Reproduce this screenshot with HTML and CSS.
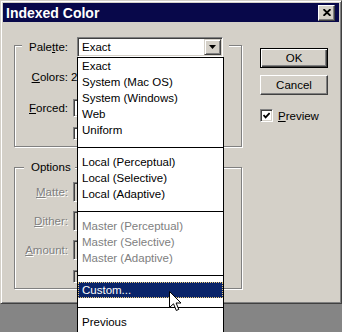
FILE: index.html
```html
<html lang="en">
<head>
    <meta charset="UTF-8">
    <title>Indexed Color</title>
    <link rel="stylesheet" href="styles.css">
</head>
<body>
    <div class="dialog">
        <div class="titlebar">
            <span class="title">Indexed Color</span>
            <span class="close-btn">
                <svg width="8" height="7" viewBox="0 0 8 7"><path d="M0.5 0.2 L7.5 6.8 M7.5 0.2 L0.5 6.8" stroke="#000" stroke-width="1.9"/></svg>
            </span>
        </div>

        <div class="dialog-body">
            <div class="groups">
                <!-- Palette group -->
                <div class="group group-palette">
                    <div class="group-head palette-head">
                        <span class="label">Pale<u>t</u>te:</span>
                        <div class="combo palette-combo">
                            <span class="combo-text">Exact</span>
                            <span class="combo-btn">
                                <svg width="7" height="4" viewBox="0 0 7 4"><polygon points="0,0 7,0 3.5,4" fill="#000"/></svg>
                            </span>
                            <ul class="dropdown">
                                <li>Exact</li>
                                <li>System (Mac OS)</li>
                                <li>System (Windows)</li>
                                <li>Web</li>
                                <li>Uniform</li>
                                <li class="sep"></li>
                                <li>Local (Perceptual)</li>
                                <li>Local (Selective)</li>
                                <li>Local (Adaptive)</li>
                                <li class="sep"></li>
                                <li class="disabled">Master (Perceptual)</li>
                                <li class="disabled">Master (Selective)</li>
                                <li class="disabled">Master (Adaptive)</li>
                                <li class="sep"></li>
                                <li class="selected">Custom...</li>
                                <li class="sep"></li>
                                <li>Previous</li>
                            </ul>
                        </div>
                    </div>
                    <div class="row colors-row">
                        <span class="label"><u>C</u>olors:</span>
                        <span class="value">2</span>
                    </div>
                    <div class="row forced-row">
                        <span class="label"><u>F</u>orced:</span>
                        <span class="field"></span>
                    </div>
                    <span class="check check-inset"></span>
                </div>

                <!-- Options group -->
                <div class="group group-options">
                    <div class="group-head options-head">Options</div>
                    <div class="row matte-row">
                        <span class="label dim"><u>M</u>atte:</span>
                        <span class="field field-off"></span>
                    </div>
                    <div class="row dither-row">
                        <span class="label dim"><u>D</u>ither:</span>
                        <span class="field field-off"></span>
                    </div>
                    <div class="row amount-row">
                        <span class="label dim"><u>A</u>mount:</span>
                        <span class="field field-off"></span>
                    </div>
                    <span class="check check-inset check-off"></span>
                </div>
            </div>

            <div class="buttons">
                <button class="btn btn-default">OK</button>
                <button class="btn btn-cancel">Cancel</button>
                <div class="preview-row">
                    <span class="check">
                        <svg width="7" height="7" viewBox="0 0 7 7"><path d="M0.5 3 L2.6 5.3 L6.6 1" stroke="#000" stroke-width="1.8" fill="none"/></svg>
                    </span>
                    <span><u>P</u>review</span>
                </div>
            </div>
        </div>

        <!-- mouse pointer over the open list -->
        <svg class="cursor" width="13" height="21" viewBox="0 0 13 21">
            <path d="M0.5 0.5 V16.5 L4.5 12.8 L7.3 19.5 L9.8 18.4 L7.1 12 H12 Z" fill="#fff" stroke="#000" stroke-width="1"/>
        </svg>
    </div>
</body>
</html>
```

FILE: styles.css
```css
* {
    box-sizing: border-box;
}

html, body {
    margin: 0;
    overflow: hidden;
}

body {
    background-color: #858585;
    font-family: "Liberation Sans", Arial, sans-serif;
    font-size: 11.5px;
    color: #000;
}

.dialog {
    position: relative;
    width: 342px;
    height: 304px;
    padding: 2px;
    background-color: #d4d0c8;
    border: 1px solid;
    border-color: #d4d0c8 #404040 #404040 #d4d0c8;
    box-shadow: inset 1px 1px #fff, inset -1px -1px #808080;
}

.titlebar {
    height: 19px;
    display: flex;
    align-items: center;
    justify-content: space-between;
    padding: 0 4px 0 3px;
    background-color: #08084a; /* dark navy */
}

.title {
    color: #fff;
    font-weight: bold;
    font-size: 14px;
}

.close-btn {
    width: 17px;
    height: 16px;
    display: flex;
    align-items: center;
    justify-content: center;
    background-color: #d4d0c8;
    border: 1px solid;
    border-color: #fff #404040 #404040 #fff;
    box-shadow: inset -1px -1px #808080;
}

.dialog-body {
    display: flex;
    padding: 23px 0 0 11px;
}

.groups {
    width: 229px;
}

/* etched group frame */
.group {
    width: 228px;
    display: flex;
    flex-direction: column;
    align-items: flex-start;
    border: 1px solid #808080;
    box-shadow: inset 1px 1px #fff, 1px 1px #fff;
}

.group-palette {
    height: 102px;
}

.group-options {
    height: 122px;
    margin-top: 20px;
}

.group-head {
    background-color: #d4d0c8;
}

.palette-head {
    display: flex;
    align-items: center;
    gap: 9px;
    margin: -9px 0 0 7px;
    padding-right: 6px;
}

.palette-head .label {
    width: 46px;
    text-align: right;
}

.options-head {
    margin: -9px 0 0 9px;
    padding: 0 4px 0 7px;
    line-height: 16px;
}

.row {
    display: flex;
    align-items: center;
    gap: 5px;
}

.row .label {
    width: 53px;
    text-align: right;
}

.colors-row {
    margin-top: 12px;
    line-height: 16px;
}

.colors-row .value {
    margin-left: -2px;
}

.forced-row {
    margin-top: 14px;
}

.forced-row .field {
    height: 18px;
}

.matte-row {
    margin-top: 7px;
}

.dither-row, .amount-row {
    margin-top: 9px;
}

.dim {
    color: #808080;
    text-shadow: 1px 1px #fff;
}

/* sunken edit / combo boxes */
.combo, .field, .check {
    background-color: #fff;
    border: 1px solid;
    border-color: #808080 #fff #fff #808080;
    box-shadow: inset 1px 1px #404040, inset -1px -1px #d4d0c8;
}

.combo {
    position: relative;
    width: 146px;
    height: 20px;
    padding: 1px;
    display: flex;
    align-items: center;
    justify-content: space-between;
}

.combo-text {
    padding-left: 3px;
}

.combo-btn {
    width: 17px;
    height: 16px;
    display: flex;
    align-items: center;
    justify-content: center;
    background-color: #d4d0c8;
    border: 1px solid;
    border-color: #d4d0c8 #404040 #404040 #d4d0c8;
    box-shadow: inset 1px 1px #fff, inset -1px -1px #808080;
}

.field {
    width: 140px;
    height: 20px;
}

.field-off, .check-off {
    background-color: #d4d0c8;
}

.check {
    width: 13px;
    height: 13px;
    display: flex;
    align-items: center;
    justify-content: center;
}

.check-inset {
    margin: 10px 0 0 58px;
}

/* open palette list */
.dropdown {
    position: absolute;
    left: -1px;
    top: 19px;
    width: 147px;
    height: 290px;
    margin: 0;
    padding: 0;
    list-style: none;
    background-color: #fff;
    border: 1px solid #000;
    z-index: 2;
}

.dropdown li {
    height: 16px;
    line-height: 16px;
    padding-left: 4px;
    white-space: nowrap;
}

.dropdown .sep {
    padding: 9px 0 0;
}

.dropdown .sep::before {
    content: "";
    display: block;
    height: 1px;
    background-color: #000;
}

.dropdown .disabled {
    color: #808080;
}

.dropdown .selected {
    background-color: #0a246a;
    color: #fff;
    outline: 1px dotted #e8c878;
    outline-offset: -1px;
}

.buttons {
    display: flex;
    flex-direction: column;
    margin: 3px 0 0 17px;
}

.btn {
    width: 68px;
    height: 20px;
    padding: 0;
    font-family: inherit;
    font-size: 11.5px;
    color: #000;
    background-color: #d4d0c8;
    border: 1px solid;
    border-color: #fff #404040 #404040 #fff;
    box-shadow: inset -1px -1px #808080;
}

.btn-default {
    border-color: #000;
    box-shadow: inset 1px 1px #fff, inset -1px -1px #404040, inset -2px -2px #808080;
}

.btn-cancel {
    margin-top: 7px;
}

.preview-row {
    display: flex;
    align-items: center;
    gap: 5px;
    margin-top: 14px;
}

.cursor {
    position: absolute;
    left: 168px;
    top: 290px;
    z-index: 3;
}
```
